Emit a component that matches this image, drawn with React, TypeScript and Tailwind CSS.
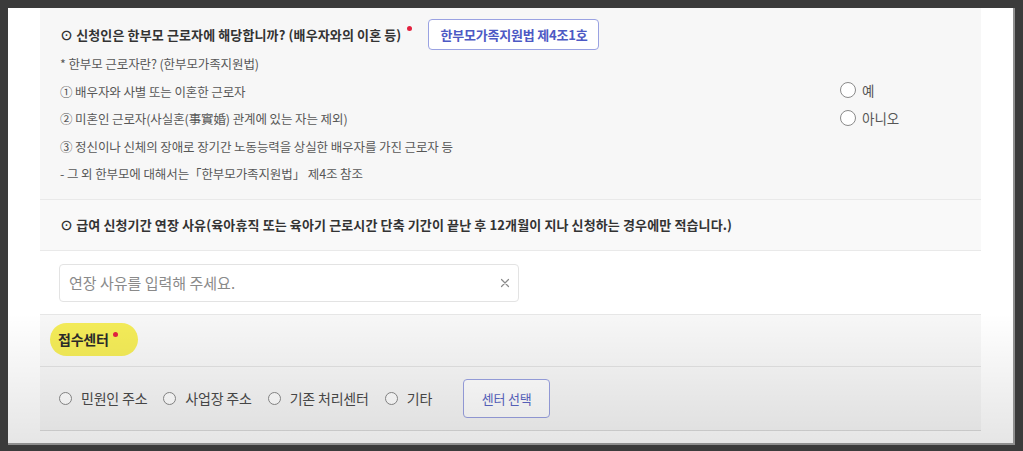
import React from "react";

const KR = { fontFamily: '"Noto Sans CJK KR", "Noto Sans", sans-serif' };

function Radio({ label, size = "sm" }: { label: string; size?: "sm" | "lg" }) {
  return (
    <label className="flex items-center">
      <span
        className={
          size === "lg"
            ? "w-[16px] h-[16px] rounded-full border border-[#8a8a8a] bg-white"
            : "w-[13px] h-[13px] rounded-full border border-[#8a8a8a] bg-white"
        }
      />
      <span
        className={
          size === "lg"
            ? "ml-[6px] text-[13.5px] leading-[16px] text-[#555]"
            : "ml-[9px] text-[14px] tracking-[-0.2px] text-[#4a4a4a]"
        }
      >
        {label}
      </span>
    </label>
  );
}

function Dot() {
  return <span className="block w-[5px] h-[5px] rounded-full bg-[#e3213f]" />;
}

export default function App() {
  return (
    <div className="w-[1023px] h-[451px] bg-[#3b3b3b] pt-[8px] pl-[8px]" style={KR}>
      <div className="relative w-[1007px] h-[437px] bg-white border-r-2 border-b-2 border-[#8f8f8f] overflow-hidden">
        <div className="ml-[32px] w-[941px]">
          {/* Row 1 */}
          <div className="flex h-[192px] bg-[#f7f7f7] border-b border-[#e9e9e9]">
            <div className="flex-1 pl-[20px] pt-[11px]">
              <div className="flex items-center h-[31px]">
                <span className="text-[13px] font-bold tracking-[0.12px] text-[#333]">
                  ⊙ 신청인은 한부모 근로자에 해당합니까? (배우자와의 이혼 등)
                </span>
                <span className="ml-[6px] self-start mt-[7px]">
                  <Dot />
                </span>
                <button className="ml-[16px] h-[31px] px-[11px] rounded-[4px] border border-[#9aa2e2] bg-white text-[13px] font-bold tracking-[-0.2px] text-[#4d59c4]">
                  한부모가족지원법 제4조1호
                </button>
              </div>
              <div className="text-[12.5px] tracking-[-0.1px] text-[#575757] leading-[27.5px]">
                <div>* 한부모 근로자란? (한부모가족지원법)</div>
                <div>① 배우자와 사별 또는 이혼한 근로자</div>
                <div>② 미혼인 근로자(사실혼(事實婚) 관계에 있는 자는 제외)</div>
                <div>③ 정신이나 신체의 장애로 장기간 노동능력을 상실한 배우자를 가진 근로자 등</div>
                <div>- 그 외 한부모에 대해서는「한부모가족지원법」 제4조 참조</div>
              </div>
            </div>
            <div className="w-[141px] pt-[74px] flex flex-col gap-[12px]">
              <Radio label="예" size="lg" />
              <Radio label="아니오" size="lg" />
            </div>
          </div>

          {/* Row 2 */}
          <div className="flex items-center h-[51px] bg-[#f9f9f9] border-b border-[#e9e9e9] pl-[20px]">
            <span className="text-[13px] font-bold tracking-[0.12px] text-[#333]">
              ⊙ 급여 신청기간 연장 사유(육아휴직 또는 육아기 근로시간 단축 기간이 끝난 후 12개월이 지나 신청하는 경우에만 적습니다.)
            </span>
          </div>

          {/* Row 3 */}
          <div className="h-[64px] bg-white border-b border-[#e6e6e6] pl-[19px] pt-[13px]">
            <div className="flex items-center justify-between w-[460px] h-[38px] rounded-[4px] border border-[#e3e3e3] bg-white pl-[9px] pr-[8px]">
              <span className="text-[15px] text-[#8a8a8a]">연장 사유를 입력해 주세요.</span>
              <svg width="10" height="10" viewBox="0 0 10 10">
                <path d="M1.5 1.5L8.5 8.5M8.5 1.5L1.5 8.5" stroke="#8a8a8a" strokeWidth="1.2" strokeLinecap="round" />
              </svg>
            </div>
          </div>

          {/* Row 4 */}
          <div className="h-[52px] bg-[#f7f7f7] border-b border-[#e2e2e2] pl-[10px] pt-[8px]">
            <div className="inline-flex items-center h-[33px] w-[88px] rounded-full bg-[#f4ec58] pl-[8px]">
              <span className="text-[14px] font-bold tracking-[-0.2px] text-[#2a2a2a]">접수센터</span>
              <span className="ml-[4px] self-start mt-[9px]">
                <Dot />
              </span>
            </div>
          </div>

          {/* Row 5 */}
          <div className="flex items-center h-[64px] bg-[#f7f7f7] border-b border-[#dcdcdc] pl-[19px]">
            <div className="flex items-center gap-[16px]">
              <Radio label="민원인 주소" />
              <Radio label="사업장 주소" />
              <Radio label="기존 처리센터" />
              <Radio label="기타" />
            </div>
            <button className="ml-[31px] h-[39px] w-[87px] rounded-[4px] border border-[#9aa2e2] bg-white text-[13px] tracking-[-0.2px] text-[#5a66c4]">
              센터 선택
            </button>
          </div>
        </div>
        <div className="pointer-events-none absolute left-0 right-0 bottom-0 h-[130px] bg-linear-to-b from-transparent to-black/[0.1]" />
      </div>
    </div>
  );
}
